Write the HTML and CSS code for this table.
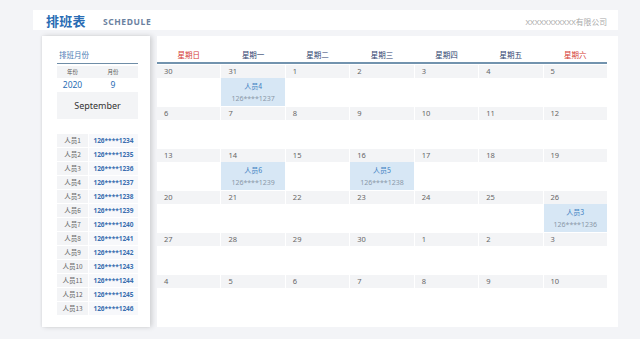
FILE: index.html
```html
<!DOCTYPE html>
<html lang="zh">
<head>
<meta charset="utf-8">
<link rel="stylesheet" href="styles.css">
</head>
<body>
<div class="page">
  <div class="header">
    <span class="title">排班表</span>
    <span class="subtitle">SCHEDULE</span>
    <span class="company">XXXXXXXXXXX有限公司</span>
  </div>
  <div class="main">
    <div class="left">
      <div class="lt-title">排班月份</div>
      <div class="ym-head"><span>年份</span><span>月份</span></div>
      <div class="ym-val"><span>2020</span><span>9</span></div>
      <div class="month-name">September</div>
      <div class="staff">
        <div class="srow"><span class="sn">人员1</span><span class="sp">126****1234</span></div>
        <div class="srow"><span class="sn">人员2</span><span class="sp">126****1235</span></div>
        <div class="srow"><span class="sn">人员3</span><span class="sp">126****1236</span></div>
        <div class="srow"><span class="sn">人员4</span><span class="sp">126****1237</span></div>
        <div class="srow"><span class="sn">人员5</span><span class="sp">126****1238</span></div>
        <div class="srow"><span class="sn">人员6</span><span class="sp">126****1239</span></div>
        <div class="srow"><span class="sn">人员7</span><span class="sp">126****1240</span></div>
        <div class="srow"><span class="sn">人员8</span><span class="sp">126****1241</span></div>
        <div class="srow"><span class="sn">人员9</span><span class="sp">126****1242</span></div>
        <div class="srow"><span class="sn">人员10</span><span class="sp">126****1243</span></div>
        <div class="srow"><span class="sn">人员11</span><span class="sp">126****1244</span></div>
        <div class="srow"><span class="sn">人员12</span><span class="sp">126****1245</span></div>
        <div class="srow"><span class="sn">人员13</span><span class="sp">126****1246</span></div>
      </div>
    </div>
    <div class="cal">
      <div class="wk-head">
        <span class="we">星期日</span><span>星期一</span><span>星期二</span><span>星期三</span><span>星期四</span><span>星期五</span><span class="we">星期六</span>
      </div>
      <div class="grid">
        <div class="day"><div class="d">30</div></div>
        <div class="day"><div class="d">31</div><div class="p"><div class="pn">人员4</div><div class="pp">126****1237</div></div></div>
        <div class="day"><div class="d">1</div></div>
        <div class="day"><div class="d">2</div></div>
        <div class="day"><div class="d">3</div></div>
        <div class="day"><div class="d">4</div></div>
        <div class="day"><div class="d">5</div></div>

        <div class="day"><div class="d">6</div></div>
        <div class="day"><div class="d">7</div></div>
        <div class="day"><div class="d">8</div></div>
        <div class="day"><div class="d">9</div></div>
        <div class="day"><div class="d">10</div></div>
        <div class="day"><div class="d">11</div></div>
        <div class="day"><div class="d">12</div></div>

        <div class="day"><div class="d">13</div></div>
        <div class="day"><div class="d">14</div><div class="p"><div class="pn">人员6</div><div class="pp">126****1239</div></div></div>
        <div class="day"><div class="d">15</div></div>
        <div class="day"><div class="d">16</div><div class="p"><div class="pn">人员5</div><div class="pp">126****1238</div></div></div>
        <div class="day"><div class="d">17</div></div>
        <div class="day"><div class="d">18</div></div>
        <div class="day"><div class="d">19</div></div>

        <div class="day"><div class="d">20</div></div>
        <div class="day"><div class="d">21</div></div>
        <div class="day"><div class="d">22</div></div>
        <div class="day"><div class="d">23</div></div>
        <div class="day"><div class="d">24</div></div>
        <div class="day"><div class="d">25</div></div>
        <div class="day"><div class="d">26</div><div class="p"><div class="pn">人员3</div><div class="pp">126****1236</div></div></div>

        <div class="day"><div class="d">27</div></div>
        <div class="day"><div class="d">28</div></div>
        <div class="day"><div class="d">29</div></div>
        <div class="day"><div class="d">30</div></div>
        <div class="day"><div class="d">1</div></div>
        <div class="day"><div class="d">2</div></div>
        <div class="day"><div class="d">3</div></div>

        <div class="day"><div class="d">4</div></div>
        <div class="day"><div class="d">5</div></div>
        <div class="day"><div class="d">6</div></div>
        <div class="day"><div class="d">7</div></div>
        <div class="day"><div class="d">8</div></div>
        <div class="day"><div class="d">9</div></div>
        <div class="day"><div class="d">10</div></div>
      </div>
    </div>
  </div>
</div>
</body>
</html>
```

FILE: styles.css
```css
* { box-sizing: border-box; }
html, body { margin: 0; padding: 0; }
body {
  background: #f3f4f7;
  font-family: "Noto Sans", "Noto Sans CJK SC", sans-serif;
  width: 640px;
  height: 339px;
  overflow: hidden;
}
.page {
  padding: 10px 0 0 33px;
  width: 618px;
}
.header {
  height: 20px;
  background: #ffffff;
  display: flex;
  align-items: center;
  padding: 0 11px 0 13px;
}
.title {
  font-family: "Noto Sans CJK SC", sans-serif;
  font-weight: 700;
  font-size: 13px;
  color: #2a6cb4;
  letter-spacing: 0.3px;
}
.subtitle {
  margin-left: 17px;
  font-weight: 700;
  font-size: 8.5px;
  color: #6b82a0;
  letter-spacing: 0.6px;
  padding-top: 2px;
}
.company {
  margin-left: auto;
  font-size: 7.8px;
  color: #a9a9a9;
  padding-top: 3px;
}
.main {
  display: flex;
  margin: 6px 0 0 9px;
  height: 291px;
  gap: 7px;
}
.left {
  width: 108px;
  background: #ffffff;
  padding: 14px 12px 0 15px;
  box-shadow: 2px 0 5px rgba(0, 0, 0, 0.16), -1px 0 2px rgba(0, 0, 0, 0.05);
}
.lt-title {
  height: 14px;
  font-size: 7.5px;
  line-height: 11px;
  color: #4a7bb3;
  padding-left: 2px;
  border-bottom: 1.5px solid #6f8da7;
}
.ym-head, .ym-val, .srow {
  display: flex;
}
.ym-head {
  margin-top: 2px;
  height: 12px;
  background: #f3f4f6;
  font-size: 5.5px;
  line-height: 12px;
  color: #555;
}
.ym-head span:first-child, .ym-val span:first-child, .sn { width: 31px; text-align: center; }
.ym-head span:last-child, .ym-val span:last-child, .sp { flex: 1; text-align: center; }
.ym-val {
  height: 14px;
  font-size: 8.5px;
  line-height: 14px;
  color: #2a6cb4;
}
.month-name {
  height: 27px;
  background: #f3f4f6;
  font-size: 9px;
  line-height: 27px;
  color: #333;
  text-align: center;
}
.staff {
  margin-top: 15px;
  display: flex;
  flex-direction: column;
  gap: 1px;
}
.srow { height: 13px; line-height: 13px; gap: 1px; font-size: 6.5px; }
.sn { background: #f3f4f6; color: #666; font-family: "Noto Sans CJK SC", sans-serif; }
.sp { background: #f7f8fb; color: #3a6fb0; font-weight: 700; }
.cal {
  width: 461px;
  background: #ffffff;
  padding: 12px 11px 0 0;
}
.wk-head {
  display: grid;
  grid-template-columns: repeat(7, 1fr);
  column-gap: 1px;
  height: 16px;
  border-bottom: 2px solid #7293ae;
  font-family: "Noto Sans CJK SC", sans-serif;
  font-size: 7.5px;
  line-height: 14px;
  color: #2e3f6e;
  text-align: center;
}
.wk-head .we { color: #d43a34; }
.grid {
  display: grid;
  grid-template-columns: repeat(7, 1fr);
  column-gap: 1px;
  margin-top: 1px;
}
.day {
  height: 42px;
  display: flex;
  flex-direction: column;
}
.d {
  height: 13px;
  background: #f3f4f6;
  font-size: 7.5px;
  line-height: 13px;
  color: #666;
  padding-left: 7px;
}
.p {
  height: 28px;
  background: #d7e7f5;
  text-align: center;
  font-size: 7px;
  padding-top: 2px;
}
.pn { color: #3d7fc2; line-height: 12px; font-family: "Noto Sans CJK SC", sans-serif; }
.pp { color: #8a98a8; line-height: 13px; }
```
